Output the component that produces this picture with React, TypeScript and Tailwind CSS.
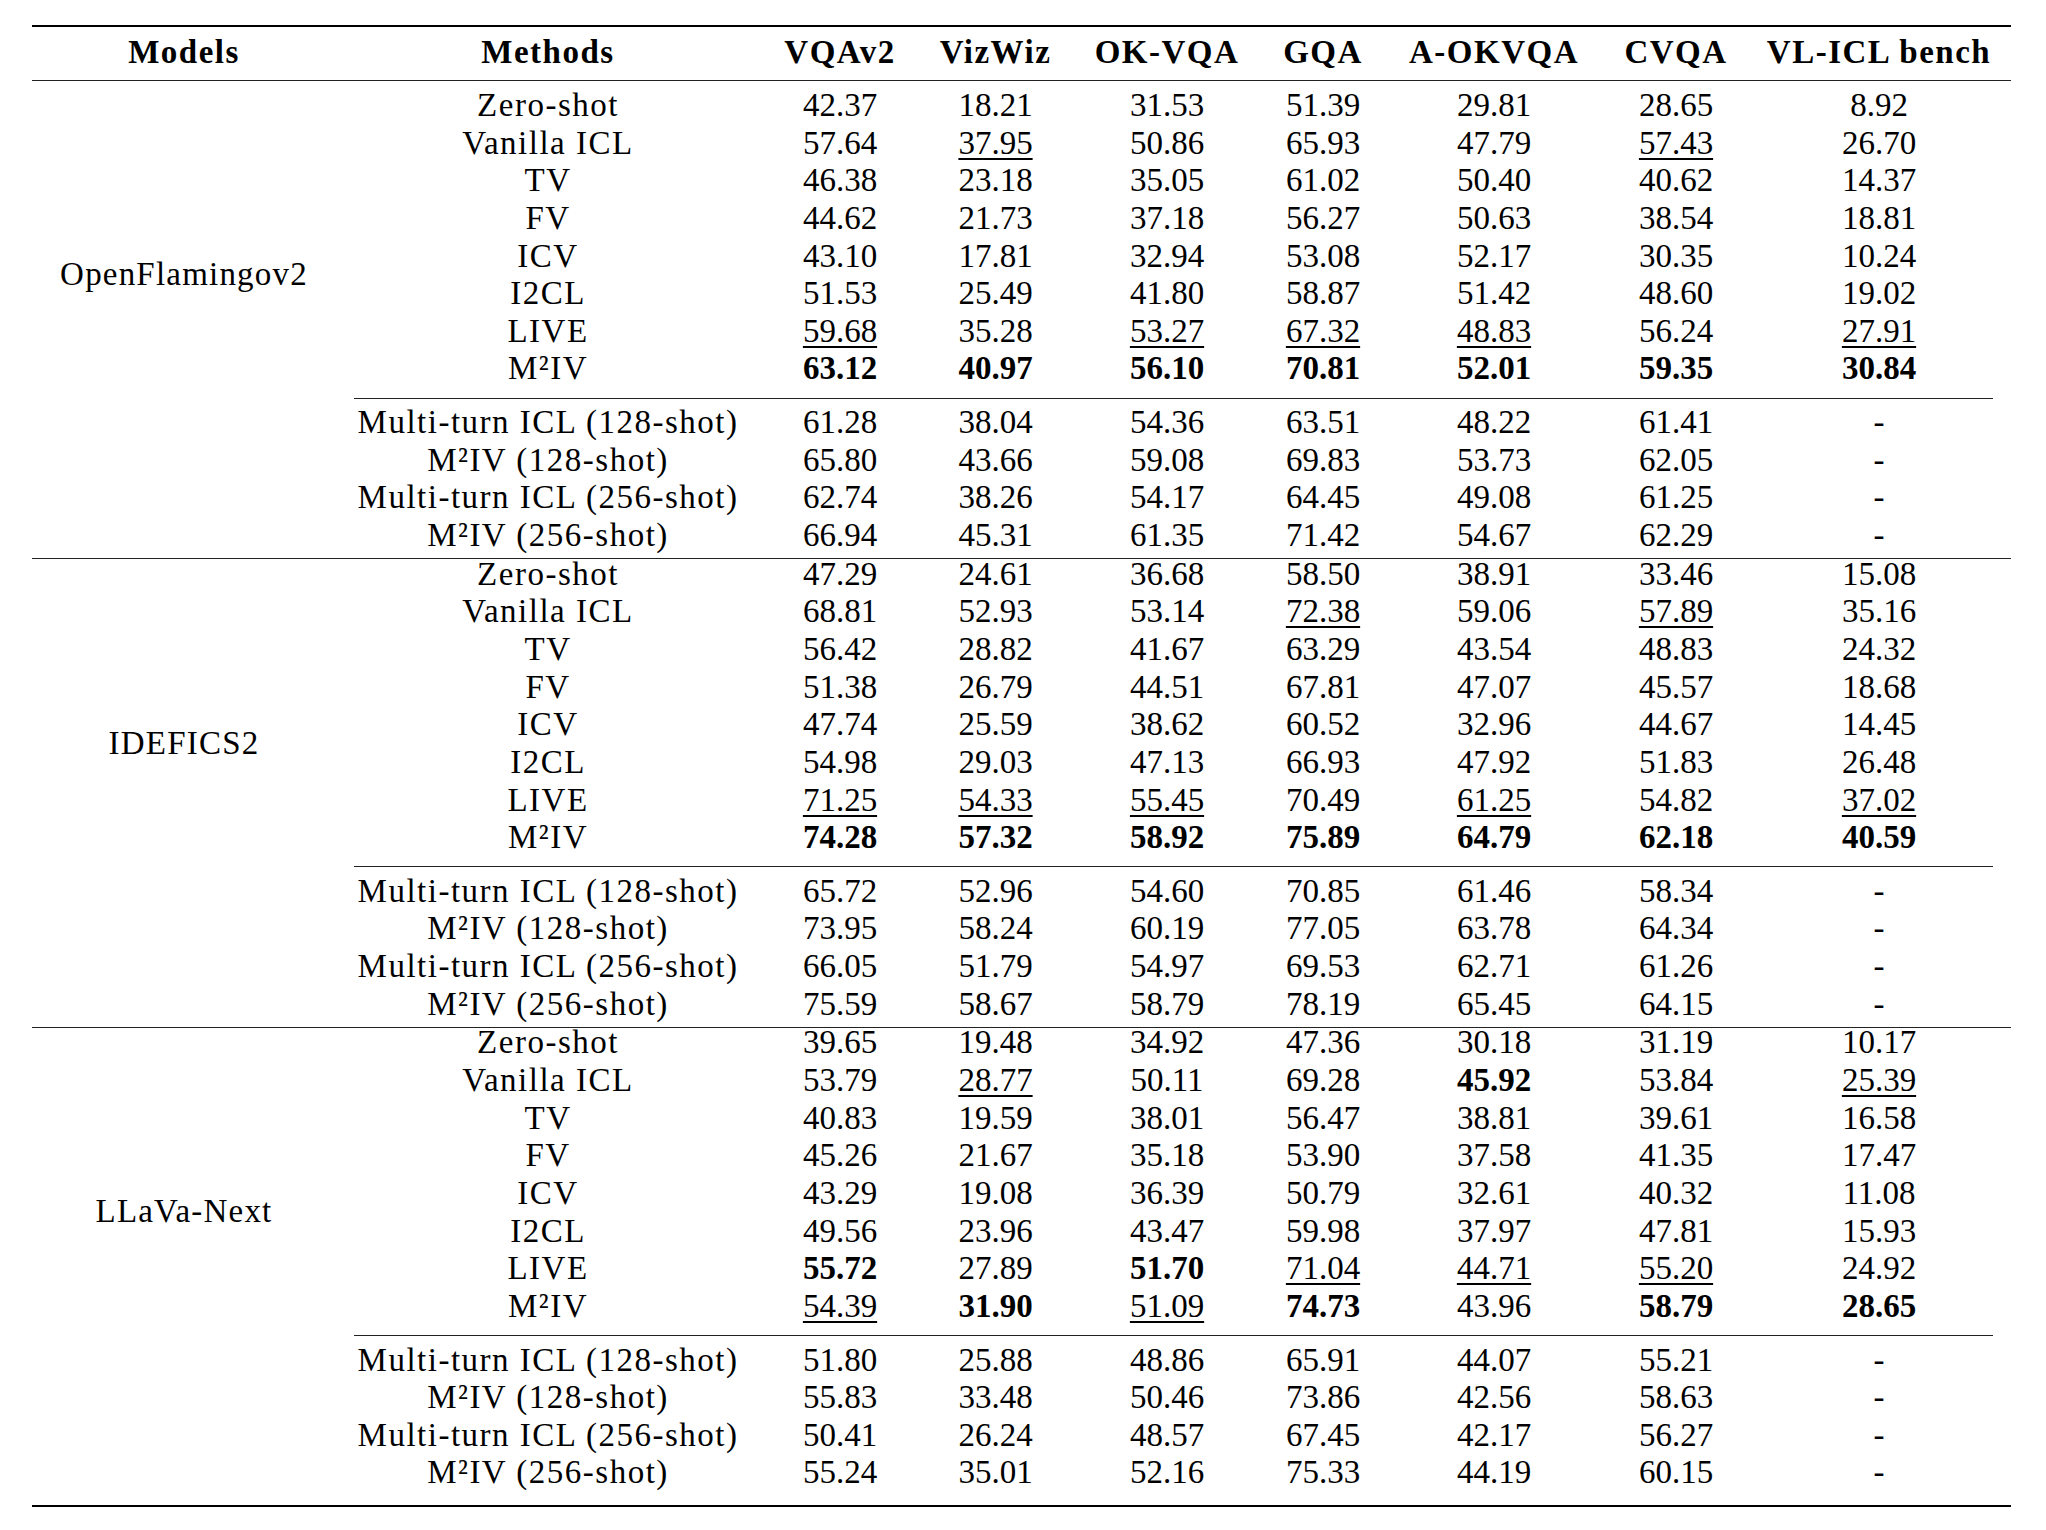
import React from 'react';

type Cell = { v: string; b?: boolean; u?: boolean };

// "*" prefix = bold (best), "_" prefix = underlined (second best)
const parse = (s: string): Cell[] =>
  s.split(' ').map((t) =>
    t.startsWith('*') ? { v: t.slice(1), b: true } : t.startsWith('_') ? { v: t.slice(1), u: true } : { v: t }
  );

const MAIN_METHODS = ['Zero-shot', 'Vanilla ICL', 'TV', 'FV', 'ICV', 'I2CL', 'LIVE', 'M²IV'];
const EXTRA_METHODS = ['Multi-turn ICL (128-shot)', 'M²IV (128-shot)', 'Multi-turn ICL (256-shot)', 'M²IV (256-shot)'];

const HEADERS = ['VQAv2', 'VizWiz', 'OK-VQA', 'GQA', 'A-OKVQA', 'CVQA', 'VL-ICL bench'];

const sections = [
  {
    model: 'OpenFlamingov2',
    main: [
      '42.37 18.21 31.53 51.39 29.81 28.65 8.92',
      '57.64 _37.95 50.86 65.93 47.79 _57.43 26.70',
      '46.38 23.18 35.05 61.02 50.40 40.62 14.37',
      '44.62 21.73 37.18 56.27 50.63 38.54 18.81',
      '43.10 17.81 32.94 53.08 52.17 30.35 10.24',
      '51.53 25.49 41.80 58.87 51.42 48.60 19.02',
      '_59.68 35.28 _53.27 _67.32 _48.83 56.24 _27.91',
      '*63.12 *40.97 *56.10 *70.81 *52.01 *59.35 *30.84',
    ],
    extra: [
      '61.28 38.04 54.36 63.51 48.22 61.41 -',
      '65.80 43.66 59.08 69.83 53.73 62.05 -',
      '62.74 38.26 54.17 64.45 49.08 61.25 -',
      '66.94 45.31 61.35 71.42 54.67 62.29 -',
    ],
  },
  {
    model: 'IDEFICS2',
    main: [
      '47.29 24.61 36.68 58.50 38.91 33.46 15.08',
      '68.81 52.93 53.14 _72.38 59.06 _57.89 35.16',
      '56.42 28.82 41.67 63.29 43.54 48.83 24.32',
      '51.38 26.79 44.51 67.81 47.07 45.57 18.68',
      '47.74 25.59 38.62 60.52 32.96 44.67 14.45',
      '54.98 29.03 47.13 66.93 47.92 51.83 26.48',
      '_71.25 _54.33 _55.45 70.49 _61.25 54.82 _37.02',
      '*74.28 *57.32 *58.92 *75.89 *64.79 *62.18 *40.59',
    ],
    extra: [
      '65.72 52.96 54.60 70.85 61.46 58.34 -',
      '73.95 58.24 60.19 77.05 63.78 64.34 -',
      '66.05 51.79 54.97 69.53 62.71 61.26 -',
      '75.59 58.67 58.79 78.19 65.45 64.15 -',
    ],
  },
  {
    model: 'LLaVa-Next',
    main: [
      '39.65 19.48 34.92 47.36 30.18 31.19 10.17',
      '53.79 _28.77 50.11 69.28 *45.92 53.84 _25.39',
      '40.83 19.59 38.01 56.47 38.81 39.61 16.58',
      '45.26 21.67 35.18 53.90 37.58 41.35 17.47',
      '43.29 19.08 36.39 50.79 32.61 40.32 11.08',
      '49.56 23.96 43.47 59.98 37.97 47.81 15.93',
      '*55.72 27.89 *51.70 _71.04 _44.71 _55.20 24.92',
      '_54.39 *31.90 _51.09 *74.73 43.96 *58.79 *28.65',
    ],
    extra: [
      '51.80 25.88 48.86 65.91 44.07 55.21 -',
      '55.83 33.48 50.46 73.86 42.56 58.63 -',
      '50.41 26.24 48.57 67.45 42.17 56.27 -',
      '55.24 35.01 52.16 75.33 44.19 60.15 -',
    ],
  },
];

function DataRow({ method, values }: { method: string; values: string }) {
  return (
    <div className="grid h-[37.65px] grid-cols-[424px_160px_151px_192px_120px_222px_142px_264px] text-center leading-[37.65px]">
      <div className="tracking-[1.5px]">{method}</div>
      {parse(values).map((c, i) => (
        <div key={i}>
          <span
            className={
              c.b
                ? 'font-bold'
                : c.u
                ? 'underline decoration-[1.5px] underline-offset-[4px]'
                : ''
            }
          >
            {c.v}
          </span>
        </div>
      ))}
    </div>
  );
}

function Section({ data, first, last }: { data: (typeof sections)[number]; first: boolean; last: boolean }) {
  return (
    <div>
      {!first && <div className="border-t border-[#222]" />}
      <div className={first ? 'mt-[6px] flex' : '-mt-[3.5px] flex'}>
        <div className="w-[304px] pt-[169px] text-center">
          <div className="leading-[37.65px] tracking-[1.2px]">{data.model}</div>
        </div>
        <div className="w-[1675px]">
          {data.main.map((v, i) => (
            <DataRow key={i} method={MAIN_METHODS[i]} values={v} />
          ))}
          <div className="mx-[18px] mt-[9.5px] mb-[5.5px] border-t border-[#222]" />
          {data.extra.map((v, i) => (
            <DataRow key={i} method={EXTRA_METHODS[i]} values={v} />
          ))}
        </div>
      </div>
      <div className={last ? 'h-[12.5px]' : 'h-[3.5px]'} />
    </div>
  );
}

export default function App() {
  return (
    <div className="min-h-screen bg-white pl-[32px] pt-[25px] font-['Liberation_Serif',serif] text-[33px] text-black">
      <div className="w-[1979px]">
        <div className="border-t-2 border-black" />
        <div className="grid h-[53px] grid-cols-[304px_424px_160px_151px_192px_120px_222px_142px_264px] items-center pb-[2px] text-center font-bold tracking-[1.5px]">
          <div>Models</div>
          <div>Methods</div>
          {HEADERS.map((h) => (
            <div key={h}>{h}</div>
          ))}
        </div>
        <div className="border-t border-[#222]" />
        {sections.map((s, i) => (
          <Section key={s.model} data={s} first={i === 0} last={i === sections.length - 1} />
        ))}
        <div className="border-t-2 border-black" />
      </div>
    </div>
  );
}
